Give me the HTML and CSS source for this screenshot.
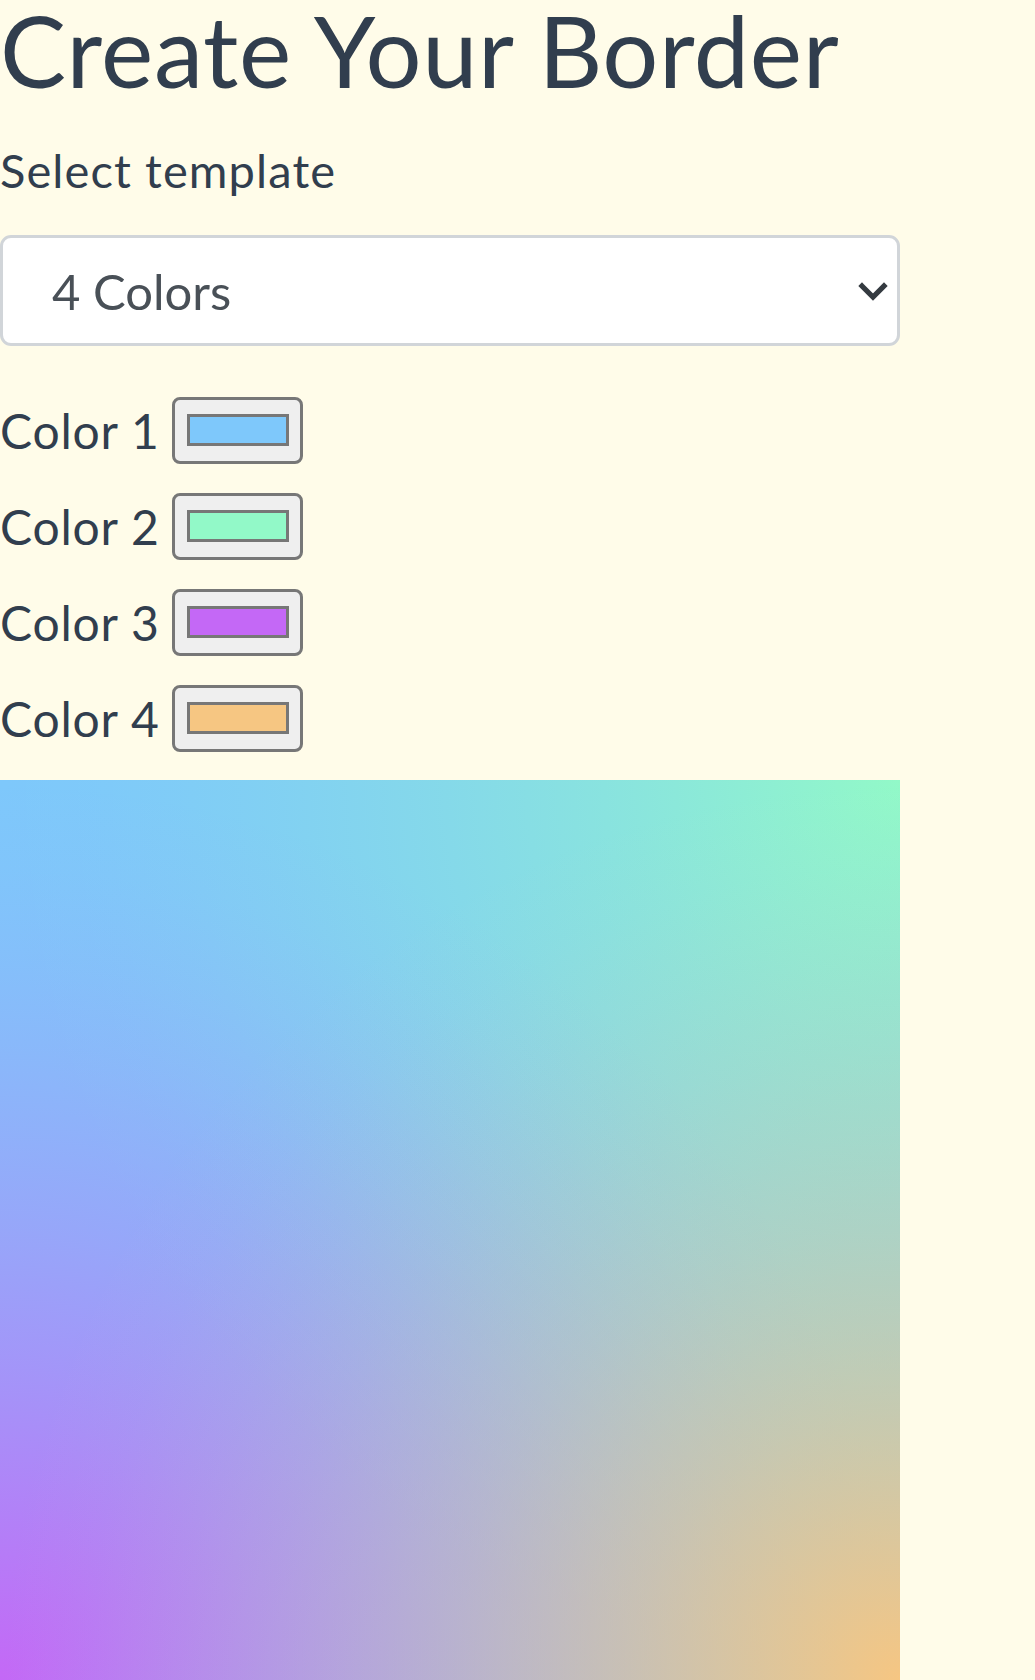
FILE: index.html
```html
<!DOCTYPE html>
<html lang="en">
<head>
<meta charset="utf-8">
<title>Create Your Border</title>
<link rel="stylesheet" href="styles.css">
</head>
<body>
<main class="page">
  <h1 class="title">Create Your Border</h1>
  <label class="field-label" for="template">Select template</label>
  <div class="select-wrap">
    <select id="template" class="select">
      <option>2 Colors</option>
      <option>3 Colors</option>
      <option selected>4 Colors</option>
    </select>
    <svg class="chevron" viewBox="0 0 16 16" aria-hidden="true"><path d="M2.5 5.5l5.5 5.5 5.5-5.5" fill="none" stroke="#343a40" stroke-width="2.6" stroke-linecap="square" stroke-linejoin="miter"/></svg>
  </div>
  <div class="colors">
    <div class="color-row"><span class="color-label">Color 1</span><span class="picker"><span class="swatch swatch-1"></span></span></div>
    <div class="color-row"><span class="color-label">Color 2</span><span class="picker"><span class="swatch swatch-2"></span></span></div>
    <div class="color-row"><span class="color-label">Color 3</span><span class="picker"><span class="swatch swatch-3"></span></span></div>
    <div class="color-row"><span class="color-label">Color 4</span><span class="picker"><span class="swatch swatch-4"></span></span></div>
  </div>
  <div class="preview"></div>
</main>
</body>
</html>
```
FILE: styles.css
```css
html, body {
  margin: 0;
  padding: 0;
  background: #fffce9;
}
body {
  font-family: Lato, "Noto Sans", sans-serif;
  color: #313e4e;
}
.page {
  display: flex;
  flex-direction: column;
  align-items: flex-start;
  width: 900px;
}
.title {
  margin: 0;
  font-size: 99px;
  line-height: 99px;
  font-weight: 400;
  letter-spacing: 0.6px;
}
.field-label {
  margin-top: 48px;
  font-size: 47px;
  line-height: 47px;
  font-weight: 400;
  letter-spacing: 1.1px;
}
.select-wrap {
  position: relative;
  margin-top: 41px;
  width: 900px;
}
.select {
  display: block;
  box-sizing: border-box;
  width: 900px;
  height: 111px;
  margin: 0;
  padding: 0 60px 0 49px;
  border: 3px solid #d1d5d9;
  border-radius: 11px;
  background: #ffffff;
  color: #495057;
  font-family: Lato, "Noto Sans", sans-serif;
  font-size: 49px;
  font-weight: 400;
  letter-spacing: 0;
  -webkit-appearance: none;
  appearance: none;
  outline: none;
}
.chevron {
  position: absolute;
  right: 11px;
  top: 40px;
  width: 32px;
  height: 32px;
  pointer-events: none;
}
.colors {
  margin-top: 51px;
  display: flex;
  flex-direction: column;
  gap: 29px;
}
.color-row {
  display: flex;
  align-items: center;
  gap: 16px;
}
.color-label {
  flex-shrink: 0;
  width: 156px;
  white-space: nowrap;
  font-size: 48px;
  line-height: 48px;
  letter-spacing: 0.8px;
}
.picker {
  flex-shrink: 0;
  box-sizing: border-box;
  width: 131px;
  height: 67px;
  border: 3px solid #777777;
  border-radius: 8px;
  background: #efefef;
  display: flex;
  align-items: center;
  justify-content: center;
  padding-bottom: 1px;
}
.swatch {
  box-sizing: border-box;
  display: block;
  width: 102px;
  height: 32px;
  border: 3px solid #777777;
}
.swatch-1 { background: #7ec8fb; }
.swatch-2 { background: #92f9c8; }
.swatch-3 { background: #c468f6; }
.swatch-4 { background: #f6c682; }
.preview {
  margin-top: 28px;
  width: 900px;
  height: 900px;
  background:
    radial-gradient(circle 900px at 100% 100%,
      rgba(246,198,130,1) 0%, rgba(246,198,130,0.854) 10%, rgba(246,198,130,0.716) 20%,
      rgba(246,198,130,0.586) 30%, rgba(246,198,130,0.465) 40%, rgba(246,198,130,0.354) 50%,
      rgba(246,198,130,0.253) 60%, rgba(246,198,130,0.164) 70%, rgba(246,198,130,0.089) 80%,
      rgba(246,198,130,0.032) 90%, rgba(246,198,130,0) 100%),
    radial-gradient(circle 900px at 0% 100%,
      rgba(196,104,246,1) 0%, rgba(196,104,246,0.854) 10%, rgba(196,104,246,0.716) 20%,
      rgba(196,104,246,0.586) 30%, rgba(196,104,246,0.465) 40%, rgba(196,104,246,0.354) 50%,
      rgba(196,104,246,0.253) 60%, rgba(196,104,246,0.164) 70%, rgba(196,104,246,0.089) 80%,
      rgba(196,104,246,0.032) 90%, rgba(196,104,246,0) 100%),
    radial-gradient(circle 900px at 100% 0%,
      rgba(146,249,200,1) 0%, rgba(146,249,200,0.854) 10%, rgba(146,249,200,0.716) 20%,
      rgba(146,249,200,0.586) 30%, rgba(146,249,200,0.465) 40%, rgba(146,249,200,0.354) 50%,
      rgba(146,249,200,0.253) 60%, rgba(146,249,200,0.164) 70%, rgba(146,249,200,0.089) 80%,
      rgba(146,249,200,0.032) 90%, rgba(146,249,200,0) 100%),
    #7ec8fb;
}
```
